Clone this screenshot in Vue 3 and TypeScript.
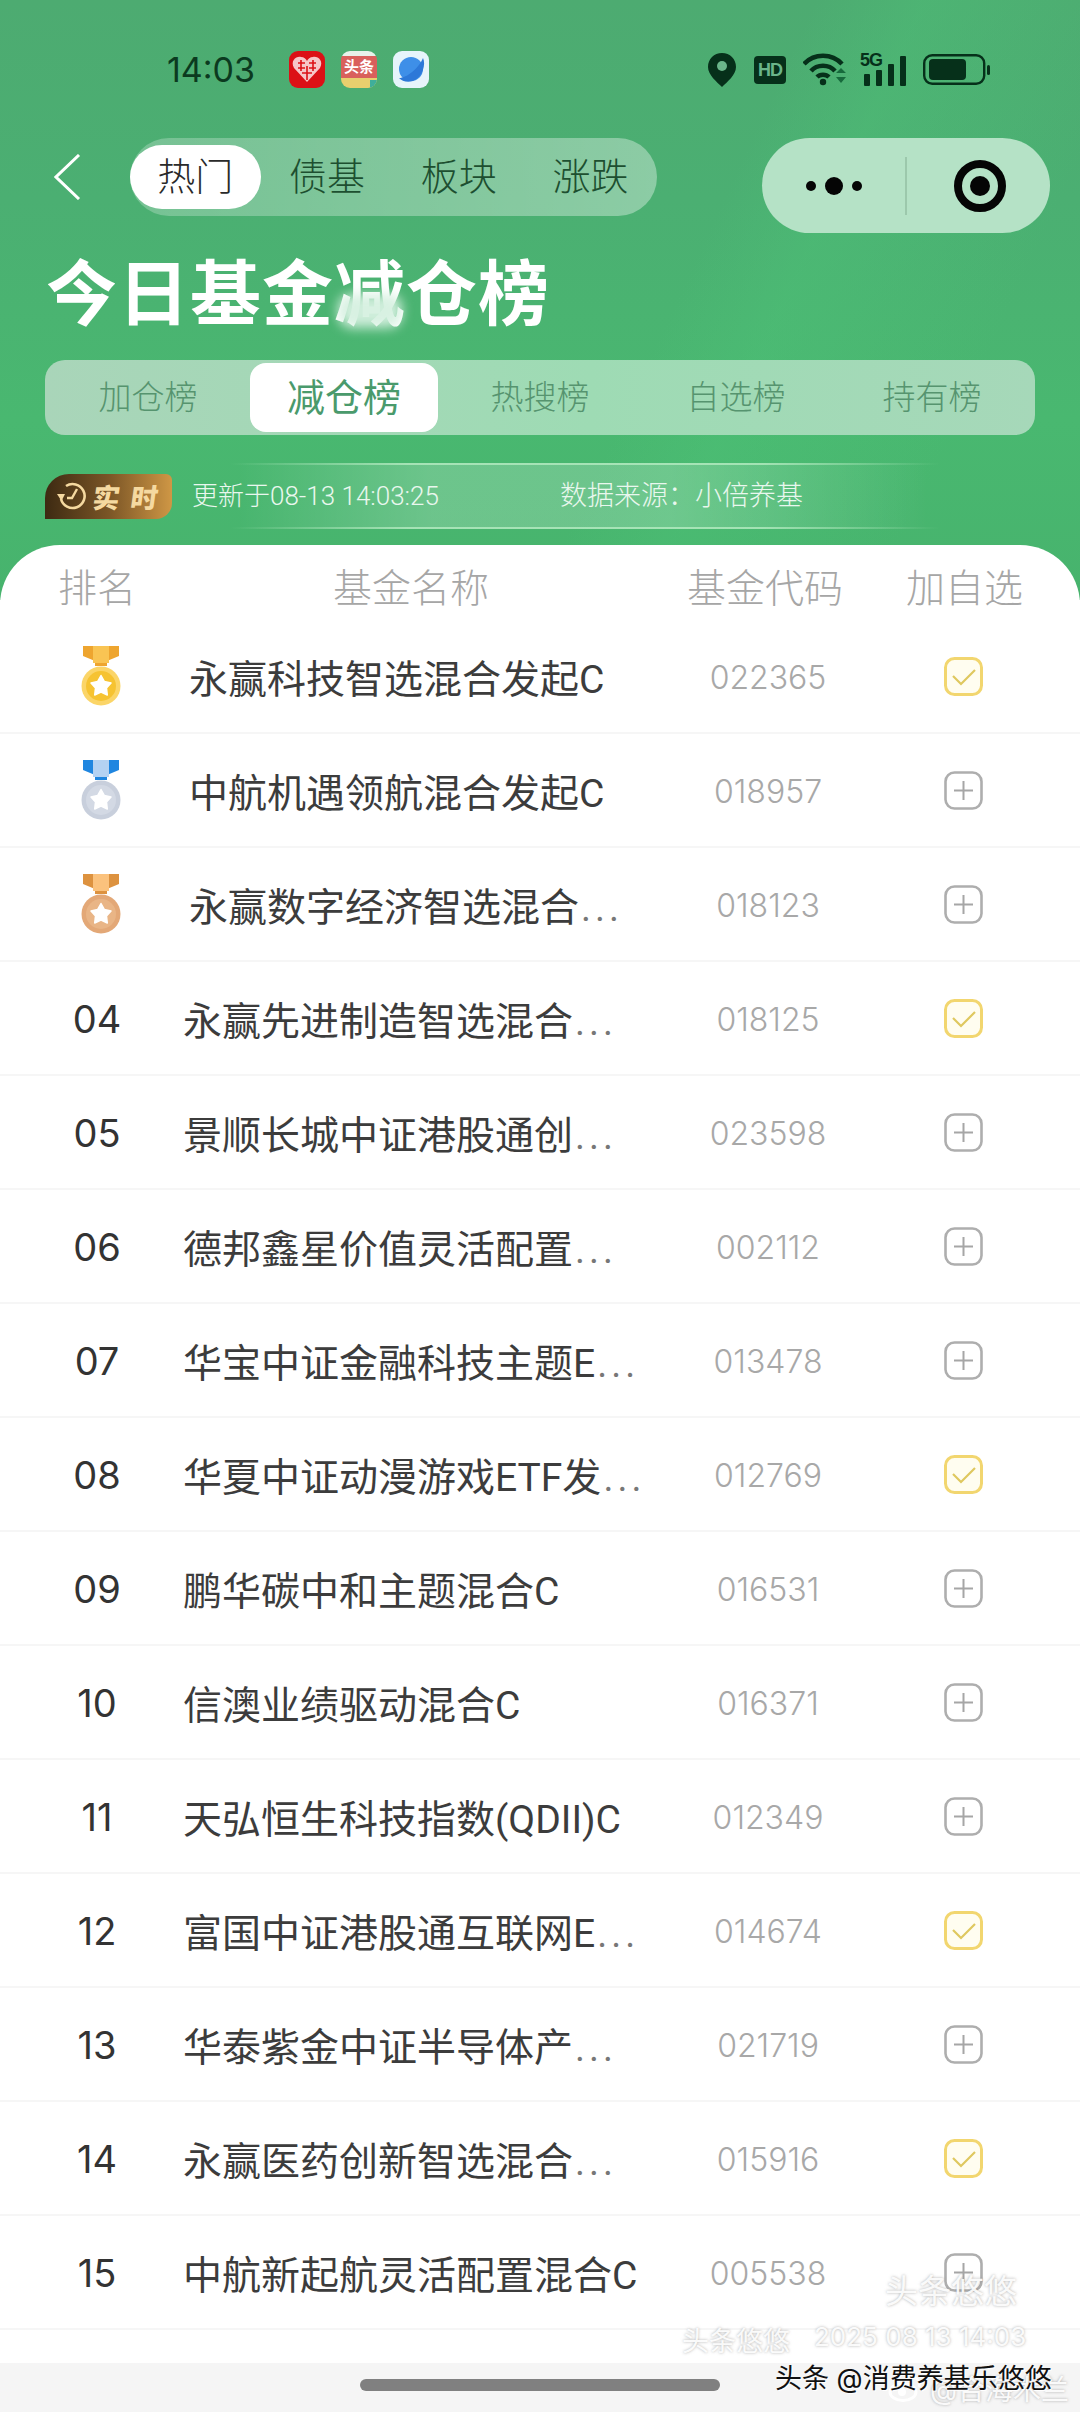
<script setup lang="ts">
interface Fund {
  rank: string
  name: string
  code: string
  added: boolean
  cut?: boolean
}

const navs = ['热门', '债基', '板块', '涨跌']
const tabs = ['加仓榜', '减仓榜', '热搜榜', '自选榜', '持有榜']

const funds: Fund[] = [
  { rank: '01', name: '永赢科技智选混合发起C', code: '022365', added: true },
  { rank: '02', name: '中航机遇领航混合发起C', code: '018957', added: false },
  { rank: '03', name: '永赢数字经济智选混合', code: '018123', added: false, cut: true },
  { rank: '04', name: '永赢先进制造智选混合', code: '018125', added: true, cut: true },
  { rank: '05', name: '景顺长城中证港股通创', code: '023598', added: false, cut: true },
  { rank: '06', name: '德邦鑫星价值灵活配置', code: '002112', added: false, cut: true },
  { rank: '07', name: '华宝中证金融科技主题E', code: '013478', added: false, cut: true },
  { rank: '08', name: '华夏中证动漫游戏ETF发', code: '012769', added: true, cut: true },
  { rank: '09', name: '鹏华碳中和主题混合C', code: '016531', added: false },
  { rank: '10', name: '信澳业绩驱动混合C', code: '016371', added: false },
  { rank: '11', name: '天弘恒生科技指数(QDII)C', code: '012349', added: false },
  { rank: '12', name: '富国中证港股通互联网E', code: '014674', added: true, cut: true },
  { rank: '13', name: '华泰紫金中证半导体产', code: '021719', added: false, cut: true },
  { rank: '14', name: '永赢医药创新智选混合', code: '015916', added: true, cut: true },
  { rank: '15', name: '中航新起航灵活配置混合C', code: '005538', added: false },
]

const medals = [
  { side: '#eea52f', mid: '#f9c453', face: '#f6c332', rim: '#fbd568' },
  { side: '#1f86e0', mid: '#b4d2f2', face: '#d3d9e4', rim: '#c8cfdc' },
  { side: '#dd923f', mid: '#fbc27d', face: '#e9b586', rim: '#e3a877' },
]
</script>

<template>
  <div class="page">
    <header class="hero">
      <div class="status">
        <span class="time">14:03</span>
        <div class="apps">
          <svg class="app" viewBox="0 0 36 37">
            <rect width="36" height="37" rx="9" fill="#dc1016" />
            <path d="M18 31 L5 17 C1 10 7 5 12 6 C15 6 17 8 18 10 C19 8 21 6 24 6 C29 5 35 10 31 17 Z" fill="#f6c6c8" />
            <path d="M9 12 H16 M9 17 H16 M20 12 H27 M20 17 H27 M13 22 H23 M12 9 V20 M24 9 V20 M18 15 V29" stroke="#dc1016" stroke-width="1.6" />
          </svg>
          <div class="app app-news">
            <span class="app-news-text">头条</span>
            <i class="app-news-foot"></i>
          </div>
          <svg class="app" viewBox="0 0 36 37">
            <rect width="36" height="37" rx="9" fill="#e6f4fb" />
            <circle cx="18" cy="18" r="12" fill="#3e8fe8" />
            <path d="M6 27 C14 27 26 17 30 7 C33 13 30 26 20 30 C14 32 9 30 6 27 Z" fill="#2d78d8" />
          </svg>
        </div>
        <div class="sys">
          <svg class="pin" viewBox="0 0 28 34">
            <path d="M14 0 C6 0 0 6 0 14 C0 22 9 29 14 34 C19 29 28 22 28 14 C28 6 22 0 14 0 Z" fill="#06301a" />
            <circle cx="14" cy="13" r="5" fill="#6ab58a" />
          </svg>
          <div class="hd">HD</div>
          <svg class="wifi" viewBox="0 0 44 33">
            <g fill="none" stroke="#06301a" stroke-width="4.5">
              <path d="M1 11 C11 0 29 0 39 11" />
              <path d="M8 18 C14 11 26 11 32 18" />
              <path d="M14 24 C17 21 23 21 26 24" />
            </g>
            <circle cx="20" cy="29" r="3.2" fill="#06301a" />
            <path d="M33 20 L38 15 L43 20 Z M33 24 L43 24 L38 30 Z" fill="#176a3c" />
          </svg>
          <div class="signal">
            <span class="five-g">5G</span>
            <svg class="bars" viewBox="0 0 42 30">
              <rect x="0" y="18" width="6" height="12" rx="1" fill="#06301a" />
              <rect x="12" y="14" width="6" height="16" rx="1" fill="#06301a" />
              <rect x="24" y="8" width="6" height="22" rx="1" fill="#06301a" />
              <rect x="36" y="0" width="6" height="30" rx="1" fill="#06301a" />
            </svg>
          </div>
          <svg class="battery" viewBox="0 0 67 31">
            <rect x="1.2" y="1.2" width="60" height="28.6" rx="8" fill="none" stroke="#06301a" stroke-width="2.4" />
            <rect x="6" y="5" width="37" height="21" rx="4" fill="#06301a" />
            <rect x="64" y="11" width="3" height="10" rx="1.5" fill="#06301a" />
          </svg>
        </div>
      </div>

      <div class="nav">
        <svg class="back" viewBox="0 0 27 46">
          <path d="M25 1 L2 23 L25 45" fill="none" stroke="#fff" stroke-width="3" />
        </svg>
        <div class="pill">
          <span v-for="(item, i) in navs" :key="item" class="pill-item" :class="{ on: i === 0 }">{{ item }}</span>
        </div>
        <div class="capsule">
          <div class="capsule-side">
            <i class="dot"></i><i class="dot big"></i><i class="dot"></i>
          </div>
          <i class="capsule-line"></i>
          <div class="capsule-side">
            <i class="target"></i>
          </div>
        </div>
      </div>

      <h1 class="title">今日基金<span class="smudge">减</span>仓榜</h1>

      <div class="tabs">
        <div v-for="(tab, i) in tabs" :key="tab" class="tab-cell">
          <span class="tab" :class="{ on: i === 1 }">{{ tab }}</span>
        </div>
      </div>

      <div class="info">
        <div class="badge">
          <svg class="clock" viewBox="0 0 30 30">
            <path d="M9 5 A12 12 0 1 1 4 18" fill="none" stroke="#f5d9a0" stroke-width="2.6" />
            <path d="M0 13 L8 13 L4.5 20 Z" fill="#f5d9a0" />
            <path d="M20 8 L15 17 L10 17" fill="none" stroke="#f5d9a0" stroke-width="2.4" />
          </svg>
          <span>实时</span>
        </div>
        <span class="updated">更新于08-13 14:03:25</span>
        <span class="source">数据来源：小倍养基</span>
      </div>
    </header>

    <main class="card">
      <div class="head">
        <span>排名</span>
        <span>基金名称</span>
        <span>基金代码</span>
        <span>加自选</span>
      </div>

      <div v-for="(fund, i) in funds" :key="fund.code" class="row">
        <div class="rank">
          <svg v-if="i < 3" class="medal" viewBox="0 0 40 60">
            <path d="M2 0 H38 V10 L26 15 V20 H14 V15 L2 10 Z" :fill="medals[i].side" />
            <rect x="12" y="0" width="16" height="17" :fill="medals[i].mid" />
            <circle cx="20" cy="40" r="19.5" :fill="medals[i].rim" />
            <circle cx="20" cy="40" r="15" :fill="medals[i].face" />
            <path d="M20 29.5 L23.4 35.6 L30 37 L25.5 42 L26.3 49 L20 46 L13.7 49 L14.5 42 L10 37 L16.6 35.6 Z" fill="#fff" stroke="#fff" stroke-width="1.5" stroke-linejoin="round" />
          </svg>
          <template v-else>{{ fund.rank }}</template>
        </div>
        <div class="name" :class="{ top: i < 3 }">{{ fund.name }}<span v-if="fund.cut" class="more">...</span></div>
        <div class="code">{{ fund.code }}</div>
        <div class="action">
          <svg v-if="fund.added" class="box" viewBox="0 0 39 39">
            <rect x="1.5" y="1.5" width="36" height="36" rx="9" fill="#fffdf0" stroke="#f2d66f" stroke-width="3" />
            <path d="M9 19 L17 27 L31 13" fill="none" stroke="#dfc85f" stroke-width="2.2" />
          </svg>
          <svg v-else class="box" viewBox="0 0 39 39">
            <rect x="1.5" y="1.5" width="36" height="36" rx="9" fill="none" stroke="#aeaeae" stroke-width="2.6" />
            <path d="M10 19.5 H29 M19.5 10 V29" stroke="#a6a6a6" stroke-width="2" />
          </svg>
        </div>
      </div>

      <div class="spacer"></div>
      <footer class="home">
        <i class="home-bar"></i>
      </footer>

      <span class="mark mark-a">头条悠悠</span>
      <span class="mark mark-b">头条悠悠</span>
      <span class="mark mark-c">2025 08 13 14:03</span>
      <svg class="weibo" viewBox="0 0 34 28">
        <ellipse cx="15" cy="18" rx="13" ry="8.5" fill="none" stroke="#fff" stroke-width="3" />
        <circle cx="14" cy="18" r="4" fill="#fff" />
        <path d="M22 3 C28 2 33 7 31 13" fill="none" stroke="#fff" stroke-width="2.5" />
      </svg>
      <span class="mark mark-d">@合海木兰</span>
      <span class="mark-e">头条 @消费养基乐悠悠</span>
    </main>
  </div>
</template>

<style scoped>
.page {
  position: relative;
  width: 1080px;
  height: 2412px;
  overflow: hidden;
  font-family: Inter, "Noto Sans CJK SC", sans-serif;
  background: #fff;
}

.hero {
  height: 600px;
  margin-bottom: -55px;
  box-sizing: border-box;
  padding-top: 51px;
  background:
    linear-gradient(115deg, transparent 60%, rgba(78, 196, 120, 0.35) 68%, transparent 85%),
    linear-gradient(180deg, #4dab71 0, #4baf72 200px, #49b870 420px, #47b36d 600px);
}

.status {
  display: flex;
  align-items: center;
  height: 37px;
  padding-left: 167px;
}

.time {
  width: 122px;
  font-size: 34px;
  color: #0b3a1f;
}

.apps {
  display: flex;
  gap: 16px;
}

.app {
  display: block;
  width: 36px;
  height: 37px;
}

.app-news {
  position: relative;
  box-sizing: border-box;
  overflow: hidden;
  border-radius: 9px;
  background: linear-gradient(180deg, #e8f2ea 0 14%, #d9605c 14% 74%, #e8cf6e 74%);
  text-align: center;
}

.app-news-text {
  display: block;
  margin-top: 6px;
  font-size: 15px;
  font-weight: 700;
  line-height: 20px;
  color: #fff;
}

.app-news-foot {
  position: absolute;
  right: 0;
  bottom: 0;
  width: 7px;
  height: 8px;
  background: #3fae9a;
}

.sys {
  display: flex;
  align-items: center;
  margin-left: 279px;
}

.pin {
  width: 28px;
  height: 34px;
}

.hd {
  width: 32px;
  height: 28px;
  margin-left: 18px;
  border-radius: 4px;
  background: #06301a;
  color: #6ab58a;
  font-family: "Liberation Sans", sans-serif;
  font-size: 18px;
  font-weight: 700;
  letter-spacing: -1px;
  line-height: 28px;
  text-align: center;
}

.wifi {
  width: 44px;
  height: 33px;
  margin-left: 17px;
}

.signal {
  position: relative;
  width: 46px;
  height: 32px;
  margin-left: 13px;
}

.five-g {
  position: absolute;
  left: 0;
  top: -3px;
  font-family: "Liberation Sans", sans-serif;
  font-size: 18px;
  font-weight: 700;
  letter-spacing: -1px;
  line-height: 18px;
  color: #06301a;
}

.bars {
  position: absolute;
  left: 4px;
  top: 2px;
  width: 42px;
  height: 30px;
}

.battery {
  width: 67px;
  height: 31px;
  margin-left: 17px;
}

.nav {
  display: flex;
  align-items: flex-start;
  height: 95px;
  margin-top: 50px;
  padding-left: 54px;
}

.back {
  width: 27px;
  height: 46px;
  margin-top: 16px;
}

.pill {
  display: flex;
  width: 527px;
  height: 78px;
  margin-left: 49px;
  box-sizing: border-box;
  padding-top: 7px;
  border-radius: 39px;
  background: linear-gradient(90deg, rgba(255, 255, 255, 0.24), rgba(255, 255, 255, 0.36));
}

.pill-item {
  width: 131px;
  height: 64px;
  margin-right: 1px;
  font-size: 38px;
  font-weight: 300;
  line-height: 62px;
  text-align: center;
  color: #1d4f30;
}

.pill-item.on {
  border-radius: 32px;
  background: #fff;
  color: #2a2a2a;
}

.capsule {
  display: flex;
  align-items: center;
  width: 288px;
  height: 95px;
  margin-left: 105px;
  border-radius: 48px;
  background: #b5e2c6;
}

.capsule-side {
  display: flex;
  flex: 1;
  align-items: center;
  justify-content: center;
  gap: 9px;
}

.dot {
  width: 10px;
  height: 10px;
  border-radius: 50%;
  background: #050505;
}

.dot.big {
  width: 18px;
  height: 18px;
}

.capsule-line {
  width: 2px;
  height: 58px;
  background: #9cc8ac;
}

.target {
  position: relative;
  box-sizing: border-box;
  width: 52px;
  height: 52px;
  margin-left: 2px;
  border: 8px solid #050505;
  border-radius: 50%;
}

.target::after {
  content: "";
  position: absolute;
  left: 8px;
  top: 8px;
  width: 20px;
  height: 20px;
  border-radius: 50%;
  background: #050505;
}

.title {
  height: 90px;
  margin: 15px 0 0 46px;
  font-size: 71px;
  font-weight: 700;
  line-height: 90px;
  letter-spacing: 1px;
  color: #fff;
}

.smudge {
  position: relative;
}

.smudge::after {
  content: "";
  position: absolute;
  left: 4px;
  right: 4px;
  top: 44px;
  height: 34px;
  border-radius: 14px;
  background: rgba(214, 240, 224, 0.95);
  filter: blur(6px);
}

.tabs {
  display: grid;
  grid-template-columns: repeat(5, 196px);
  align-items: center;
  width: 990px;
  height: 75px;
  margin: 22px 0 0 45px;
  box-sizing: border-box;
  padding-left: 5px;
  border-radius: 20px;
  background: linear-gradient(90deg, #a9d5b9, #9edbb4 55%, #a6d8b9);
}

.tab-cell {
  display: flex;
  justify-content: center;
}

.tab {
  font-size: 33px;
  font-weight: 300;
  line-height: 69px;
  text-align: center;
  color: #56946f;
}

.tab.on {
  width: 188px;
  height: 69px;
  border-radius: 16px;
  background: #fff;
  font-size: 38px;
  font-weight: 400;
  color: #4a9a6c;
}

.info {
  position: relative;
  display: flex;
  align-items: center;
  height: 66px;
  margin-top: 28px;
  padding-left: 45px;
  background: linear-gradient(90deg, transparent 22%, rgba(255, 255, 255, 0.2) 40%, rgba(255, 255, 255, 0.2) 62%, transparent 86%);
}

.info::before,
.info::after {
  content: "";
  position: absolute;
  left: 230px;
  width: 710px;
  height: 2px;
  background: linear-gradient(90deg, transparent, rgba(190, 240, 200, 0.7) 25%, rgba(190, 240, 200, 0.7) 75%, transparent);
}

.info::before {
  top: 0;
}

.info::after {
  bottom: 0;
}

.badge {
  display: flex;
  align-items: center;
  width: 127px;
  height: 45px;
  box-sizing: border-box;
  padding-left: 12px;
  border-radius: 24px 6px 16px 0;
  background: linear-gradient(90deg, #3d2a12, #7a5526 50%, #cf9745);
  color: #f5d9a0;
  font-size: 27px;
  font-weight: 900;
  letter-spacing: 11px;
  white-space: nowrap;
}

.badge span {
  transform: skewX(-8deg);
}

.clock {
  flex: none;
  width: 30px;
  height: 30px;
  margin-right: 6px;
}

.updated {
  width: 368px;
  margin-left: 20px;
  padding-bottom: 5px;
  font-family: Roboto, "Noto Sans CJK SC", sans-serif;
  font-size: 26px;
  font-weight: 300;
  color: #e9f7ee;
}

.source {
  padding-bottom: 5px;
  font-size: 27px;
  font-weight: 300;
  color: #e9f7ee;
}

.card {
  position: relative;
  display: flex;
  flex-direction: column;
  height: 1867px;
  border-radius: 60px 60px 0 0;
  background: #fff;
}

.head {
  display: grid;
  flex: none;
  grid-template-columns: 275px 354px 219px auto;
  align-items: center;
  height: 75px;
  box-sizing: border-box;
  padding: 4px 0 0 58px;
  font-size: 39px;
  font-weight: 300;
  color: #a6a6a6;
}

.row {
  display: grid;
  flex: none;
  grid-template-columns: 184px 472px 224px 166px;
  align-items: center;
  height: 114px;
  box-sizing: border-box;
  border-bottom: 2px solid #f6f6f6;
}

.rank {
  padding: 2px 0 0 10px;
  font-size: 38px;
  text-align: center;
  color: #333;
}

.medal {
  display: block;
  width: 40px;
  height: 60px;
  margin: -2px auto 0 71px;
}

.name {
  margin-left: -1px;
  font-family: Roboto, "Noto Sans CJK SC", sans-serif;
  font-size: 39px;
  font-weight: 400;
  color: #3c3c3c;
  white-space: nowrap;
}

.name.top {
  padding-left: 6px;
}

.more {
  margin-left: 2px;
  font-size: 38px;
  letter-spacing: 4px;
  color: #777;
}

.code {
  padding-top: 2px;
  font-size: 32px;
  font-weight: 300;
  text-align: center;
  color: #a8a8a8;
}

.action {
  display: flex;
  justify-content: center;
}

.box {
  display: block;
  width: 39px;
  height: 39px;
}

.spacer {
  flex: none;
  height: 33px;
}

.home {
  display: flex;
  flex: 1;
  align-items: flex-start;
  justify-content: center;
  background: #f5f5f5;
}

.home-bar {
  width: 360px;
  height: 12px;
  margin-top: 16px;
  border-radius: 6px;
  background: #808080;
}

.mark {
  position: absolute;
  color: rgba(255, 255, 255, 0.92);
  text-shadow: 0 0 3px rgba(120, 120, 120, 0.6);
  white-space: nowrap;
}

.mark-a {
  left: 885px;
  top: 1720px;
  font-size: 33px;
}

.mark-b {
  left: 682px;
  top: 1775px;
  font-size: 27px;
}

.mark-c {
  left: 814px;
  top: 1776px;
  font-size: 26px;
}

.mark-d {
  left: 930px;
  top: 1823px;
  font-size: 28px;
}

.mark-e {
  position: absolute;
  left: 775px;
  top: 1812px;
  font-size: 27px;
  color: #111;
  text-shadow: 1px 1px 0 #fff;
  white-space: nowrap;
}

.weibo {
  position: absolute;
  left: 888px;
  top: 1829px;
  width: 34px;
  height: 28px;
}
</style>

<style>
html,
body {
  margin: 0;
  background: #fff;
}
</style>
